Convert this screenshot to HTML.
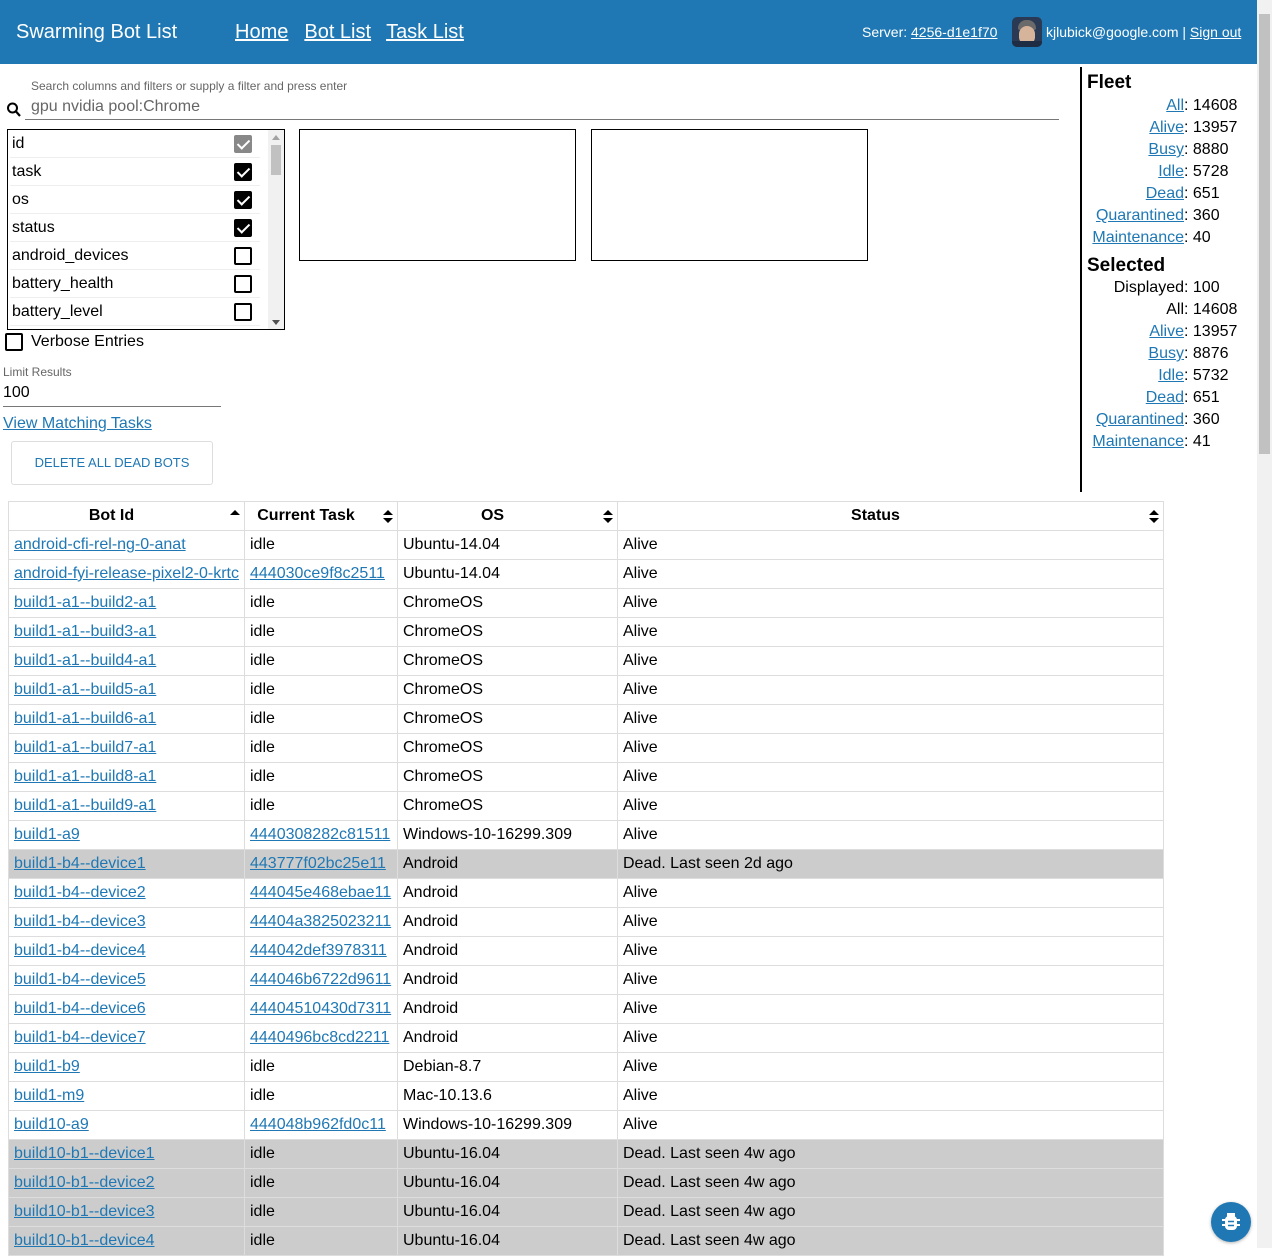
<!DOCTYPE html>
<html><head><meta charset="utf-8"><style>
*{box-sizing:border-box}
body{margin:0;width:1272px;height:1248px;overflow:hidden;font-family:"Liberation Sans",sans-serif;font-size:16px;color:#000;background:#fff;position:relative}
a{color:#1f78b4;text-decoration:underline}
.hdr{position:absolute;left:0;top:0;width:1257px;height:64px;background:#1f78b4;color:#fff}
.hdr a{color:#fff}
.abs{position:absolute}
.sb{position:absolute;right:0;top:0;width:15px;height:1248px;background:#f1f1f1}
.cb{width:18px;height:18px;border:2px solid #000;border-radius:2px;position:absolute;left:234px}
.cb.on{background:#000}
.cb.gr{background:#888;border-color:#888}
.cb.on:after,.cb.gr:after{content:"";position:absolute;left:4px;top:0px;width:5px;height:10px;border:solid #fff;border-width:0 2px 2px 0;transform:rotate(45deg)}
.row{position:absolute;left:2px;width:250px;height:28px;border-bottom:1px solid #eee;line-height:28px;padding-left:2px}
table{position:absolute;left:8px;top:501px;border-collapse:collapse;table-layout:fixed;width:1156px}
td,th{border:1px solid #ddd;height:29px;padding:0 5px;white-space:nowrap;overflow:hidden;font-size:16px;text-align:left}
th{text-align:center;font-weight:bold;position:relative;padding-right:35px}
th svg{position:absolute;right:3px;top:7px}
tr.d td{background:#ccc}
.st{position:absolute;left:1090px;width:170px}
.st div{height:22px;line-height:22px;white-space:nowrap}
.st .l{display:inline-block;width:94px;text-align:right}
</style></head><body>
<div class="hdr">
<div class="abs" style="left:16px;top:21px;font-size:20px">Swarming Bot List</div>
<div class="abs" style="left:235px;top:21px;font-size:20px"><a href="#">Home</a><a href="#" style="margin-left:16px">Bot List</a><a href="#" style="margin-left:15px">Task List</a></div>
<div class="abs" style="left:862px;top:24px;font-size:14px">Server: <a href="#">4256-d1e1f70</a></div>
<div class="abs" style="left:1012px;top:17px;width:30px;height:30px;border-radius:5px;overflow:hidden;background:#2a3a55">
<div style="position:absolute;left:6px;top:3px;width:18px;height:10px;border-radius:9px 9px 2px 2px;background:#6a6a6a"></div>
<div style="position:absolute;left:7px;top:9px;width:16px;height:19px;border-radius:8px;background:#d6b49c"></div>
<div style="position:absolute;left:0;top:24px;width:30px;height:8px;background:#1e2c44"></div>
</div>
<div class="abs" style="left:1046px;top:24px;font-size:14px">kjlubick@google.com | <a href="#">Sign out</a></div>
</div>
<div class="sb"><div style="position:absolute;left:2px;top:14px;width:11px;height:440px;background:#c1c1c1"></div></div>

<div class="abs" style="left:31px;top:79px;font-size:12px;color:#666">Search columns and filters or supply a filter and press enter</div>
<svg class="abs" style="left:6px;top:101px" width="16" height="18" viewBox="0 0 16 18"><circle cx="6.5" cy="7" r="4.5" fill="none" stroke="#000" stroke-width="2"/><path d="M10 10.5l4 4.5" stroke="#000" stroke-width="2.2"/></svg>
<div class="abs" style="left:31px;top:98px;font-size:16px;color:#666">gpu nvidia pool:Chrome</div>
<div class="abs" style="left:25px;top:119px;width:1034px;height:1px;background:#777"></div>

<div class="abs" style="left:7px;top:129px;width:278px;height:201px;border:1px solid #000;overflow:hidden">
<div class="row" style="top:0">id</div><div class="cb gr" style="top:5px;left:226px"></div>
<div class="row" style="top:28px">task</div><div class="cb on" style="top:33px;left:226px"></div>
<div class="row" style="top:56px">os</div><div class="cb on" style="top:61px;left:226px"></div>
<div class="row" style="top:84px">status</div><div class="cb on" style="top:89px;left:226px"></div>
<div class="row" style="top:112px">android_devices</div><div class="cb" style="top:117px;left:226px"></div>
<div class="row" style="top:140px">battery_health</div><div class="cb" style="top:145px;left:226px"></div>
<div class="row" style="top:168px">battery_level</div><div class="cb" style="top:173px;left:226px"></div>
<div style="position:absolute;left:260px;top:0;width:16px;height:200px;background:#f1f1f1"><div style="position:absolute;left:3px;top:15px;width:10px;height:30px;background:#c1c1c1"></div>
<svg style="position:absolute;left:4px;top:5px" width="8" height="5"><path d="M0 5L4 0L8 5z" fill="#a3a3a3"/></svg>
<svg style="position:absolute;left:4px;top:190px" width="8" height="5"><path d="M0 0L4 5L8 0z" fill="#505050"/></svg></div>
</div>
<div class="abs" style="left:299px;top:129px;width:277px;height:132px;border:1px solid #000"></div>
<div class="abs" style="left:591px;top:129px;width:277px;height:132px;border:1px solid #000"></div>

<div class="abs" style="left:5px;top:333px;width:18px;height:18px;border:2px solid #000;border-radius:2px"></div>
<div class="abs" style="left:31px;top:333px">Verbose Entries</div>
<div class="abs" style="left:3px;top:365px;font-size:12px;color:#666">Limit Results</div>
<div class="abs" style="left:3px;top:384px">100</div>
<div class="abs" style="left:3px;top:406px;width:218px;height:1px;background:#777"></div>
<div class="abs" style="left:3px;top:415px"><a href="#">View Matching Tasks</a></div>
<div class="abs" style="left:11px;top:441px;width:202px;height:44px;border:1px solid #ddd;border-radius:3px;color:#1f78b4;font-size:13px;text-align:center;line-height:42px">DELETE ALL DEAD BOTS</div>

<div class="abs" style="left:1080px;top:67px;width:2px;height:425px;background:#000"></div>
<div class="abs" style="left:1087px;top:72px;font-size:19px;font-weight:bold">Fleet</div>
<div class="st" style="top:95px">
<div><span class="l"><a href="#">All</a></span>: 14608</div>
<div><span class="l"><a href="#">Alive</a></span>: 13957</div>
<div><span class="l"><a href="#">Busy</a></span>: 8880</div>
<div><span class="l"><a href="#">Idle</a></span>: 5728</div>
<div><span class="l"><a href="#">Dead</a></span>: 651</div>
<div><span class="l"><a href="#">Quarantined</a></span>: 360</div>
<div><span class="l"><a href="#">Maintenance</a></span>: 40</div>
</div>
<div class="abs" style="left:1087px;top:255px;font-size:19px;font-weight:bold">Selected</div>
<div class="st" style="top:277px">
<div><span class="l">Displayed</span>: 100</div>
<div><span class="l">All</span>: 14608</div>
<div><span class="l"><a href="#">Alive</a></span>: 13957</div>
<div><span class="l"><a href="#">Busy</a></span>: 8876</div>
<div><span class="l"><a href="#">Idle</a></span>: 5732</div>
<div><span class="l"><a href="#">Dead</a></span>: 651</div>
<div><span class="l"><a href="#">Quarantined</a></span>: 360</div>
<div><span class="l"><a href="#">Maintenance</a></span>: 41</div>
</div>

<table>
<colgroup><col style="width:236px"><col style="width:153px"><col style="width:220px"><col style="width:546px"></colgroup>
<tr><th>Bot Id<svg width="12" height="14"><path d="M1 6L6 1L11 6z" fill="#000"/></svg></th><th>Current Task<svg width="12" height="16"><path d="M1 6L6 1L11 6zM1 9L6 14L11 9z" fill="#000"/></svg></th><th>OS<svg width="12" height="16"><path d="M1 6L6 1L11 6zM1 9L6 14L11 9z" fill="#000"/></svg></th><th>Status<svg width="12" height="16"><path d="M1 6L6 1L11 6zM1 9L6 14L11 9z" fill="#000"/></svg></th></tr>
<tr><td><a href="#">android-cfi-rel-ng-0-anat</a></td><td>idle</td><td>Ubuntu-14.04</td><td>Alive</td></tr>
<tr><td><a href="#">android-fyi-release-pixel2-0-krtc</a></td><td><a href="#">444030ce9f8c2511</a></td><td>Ubuntu-14.04</td><td>Alive</td></tr>
<tr><td><a href="#">build1-a1--build2-a1</a></td><td>idle</td><td>ChromeOS</td><td>Alive</td></tr>
<tr><td><a href="#">build1-a1--build3-a1</a></td><td>idle</td><td>ChromeOS</td><td>Alive</td></tr>
<tr><td><a href="#">build1-a1--build4-a1</a></td><td>idle</td><td>ChromeOS</td><td>Alive</td></tr>
<tr><td><a href="#">build1-a1--build5-a1</a></td><td>idle</td><td>ChromeOS</td><td>Alive</td></tr>
<tr><td><a href="#">build1-a1--build6-a1</a></td><td>idle</td><td>ChromeOS</td><td>Alive</td></tr>
<tr><td><a href="#">build1-a1--build7-a1</a></td><td>idle</td><td>ChromeOS</td><td>Alive</td></tr>
<tr><td><a href="#">build1-a1--build8-a1</a></td><td>idle</td><td>ChromeOS</td><td>Alive</td></tr>
<tr><td><a href="#">build1-a1--build9-a1</a></td><td>idle</td><td>ChromeOS</td><td>Alive</td></tr>
<tr><td><a href="#">build1-a9</a></td><td><a href="#">4440308282c81511</a></td><td>Windows-10-16299.309</td><td>Alive</td></tr>
<tr class="d"><td><a href="#">build1-b4--device1</a></td><td><a href="#">443777f02bc25e11</a></td><td>Android</td><td>Dead. Last seen 2d ago</td></tr>
<tr><td><a href="#">build1-b4--device2</a></td><td><a href="#">444045e468ebae11</a></td><td>Android</td><td>Alive</td></tr>
<tr><td><a href="#">build1-b4--device3</a></td><td><a href="#">44404a3825023211</a></td><td>Android</td><td>Alive</td></tr>
<tr><td><a href="#">build1-b4--device4</a></td><td><a href="#">444042def3978311</a></td><td>Android</td><td>Alive</td></tr>
<tr><td><a href="#">build1-b4--device5</a></td><td><a href="#">444046b6722d9611</a></td><td>Android</td><td>Alive</td></tr>
<tr><td><a href="#">build1-b4--device6</a></td><td><a href="#">44404510430d7311</a></td><td>Android</td><td>Alive</td></tr>
<tr><td><a href="#">build1-b4--device7</a></td><td><a href="#">4440496bc8cd2211</a></td><td>Android</td><td>Alive</td></tr>
<tr><td><a href="#">build1-b9</a></td><td>idle</td><td>Debian-8.7</td><td>Alive</td></tr>
<tr><td><a href="#">build1-m9</a></td><td>idle</td><td>Mac-10.13.6</td><td>Alive</td></tr>
<tr><td><a href="#">build10-a9</a></td><td><a href="#">444048b962fd0c11</a></td><td>Windows-10-16299.309</td><td>Alive</td></tr>
<tr class="d"><td><a href="#">build10-b1--device1</a></td><td>idle</td><td>Ubuntu-16.04</td><td>Dead. Last seen 4w ago</td></tr>
<tr class="d"><td><a href="#">build10-b1--device2</a></td><td>idle</td><td>Ubuntu-16.04</td><td>Dead. Last seen 4w ago</td></tr>
<tr class="d"><td><a href="#">build10-b1--device3</a></td><td>idle</td><td>Ubuntu-16.04</td><td>Dead. Last seen 4w ago</td></tr>
<tr class="d"><td><a href="#">build10-b1--device4</a></td><td>idle</td><td>Ubuntu-16.04</td><td>Dead. Last seen 4w ago</td></tr>
</table>

<div class="abs" style="left:1211px;top:1202px;width:40px;height:40px;border-radius:50%;background:#1f78b4;box-shadow:0 1px 3px rgba(0,0,0,.3)">
<svg width="40" height="40" viewBox="0 0 40 40"><rect x="14" y="14" width="12" height="14" rx="4" fill="#fff"/><rect x="16" y="11" width="8" height="4" fill="#fff"/><path d="M11 18h18M11 23h18" stroke="#fff" stroke-width="2"/><path d="M17 19.5h6M17 23.5h6" stroke="#1f78b4" stroke-width="1.5"/></svg>
</div>
</body></html>
